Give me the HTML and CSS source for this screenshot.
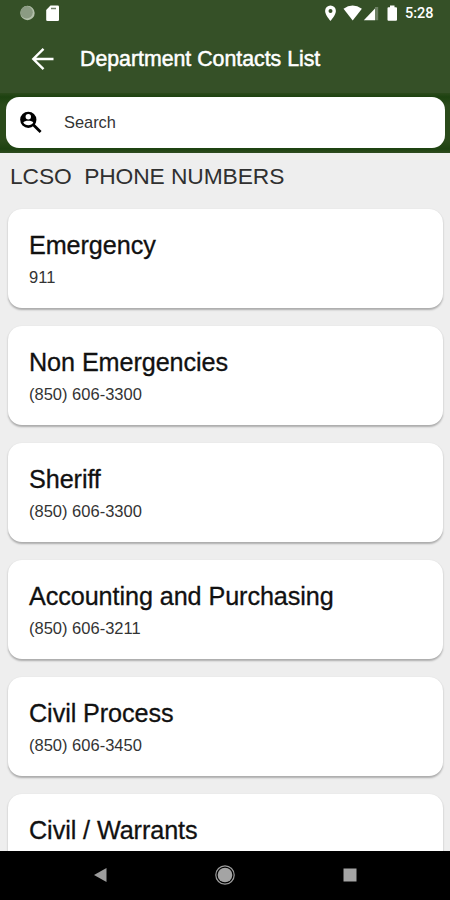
FILE: index.html
```html
<!DOCTYPE html>
<html lang="en">
<head>
<meta charset="utf-8">
<title>Department Contacts List</title>
<link rel="stylesheet" href="styles.css">
</head>
<body>
<div class="screen">
  <div class="status">
    <svg class="status-left" width="50" height="26" viewBox="0 0 50 26">
      <circle cx="17.500" cy="13" r="7.200" fill="#b3c0ab"/>
      <circle cx="16.600" cy="12.300" r="6.200" fill="#8b9b83"/>
      <path d="M40.500 5.500h7.200q1.300 0 1.300 1.300v12.900q0 1.300-1.300 1.300h-10.200q-1.300 0-1.300-1.300v-9.700z" fill="#fff"/>
      <path d="M41 8.500h5" stroke="#71806a" stroke-width="1.500"/>
    </svg>
    <svg width="80" height="26" viewBox="0 0 80 26" fill="#fff">
      <path fill-rule="evenodd" d="M5.500 5.500a5.400 5.400 0 0 0-5.400 5.400c0 4 5.400 9.900 5.400 9.900s5.400-5.900 5.400-9.900a5.400 5.400 0 0 0-5.400-5.400zm0 3.500a2 2 0 1 1 0 4 2 2 0 0 1 0-4z"/>
      <path d="M18.500 8.800q9-6.600 18.400 0l-9.200 11.700z"/>
      <path d="M50 7h3.200v13.200h-3.200z" fill="#6d8064"/>
      <path d="M50 8.500v11.700h-11.200z"/>
      <path d="M65 5.500h4.500v1.700h1.500q1 0 1 1v11.500q0 1-1 1h-7.500q-1 0-1-1v-11.500q0-1 1-1h1.500z"/>
    </svg>
    <span class="clock">5:28</span>
  </div>
  <header class="bar">
    <svg width="24" height="24" viewBox="0 0 24 24" fill="none" stroke="#fff" stroke-width="2.400"><path d="M23.500 12h-20M13.500 1.800l-10.200 10.200 10.200 10.200"/></svg>
    <h1>Department Contacts List</h1>
  </header>
  <div class="search-wrap">
    <div class="search">
      <svg width="24" height="24" viewBox="0 0 24 24">
        <circle cx="8.300" cy="8.800" r="8.100" fill="#000"/>
        <circle cx="8.300" cy="5.700" r="2.700" fill="#fff"/>
        <path d="M3.300 11.600c1-2.600 9-2.600 10 0-1.900 3.500-8.100 3.500-10 0z" fill="#fff"/>
        <path d="M12.800 13.300l7.800 7.800" stroke="#000" stroke-width="2.800"/>
      </svg>
      <span>Search</span>
    </div>
  </div>
  <main class="content">
    <h2>LCSO  PHONE NUMBERS</h2>
    <div class="cards">
      <section class="card"><h3>Emergency</h3><p>911</p></section>
      <section class="card"><h3>Non Emergencies</h3><p>(850) 606-3300</p></section>
      <section class="card"><h3>Sheriff</h3><p>(850) 606-3300</p></section>
      <section class="card"><h3>Accounting and Purchasing</h3><p>(850) 606-3211</p></section>
      <section class="card"><h3>Civil Process</h3><p>(850) 606-3450</p></section>
      <section class="card"><h3>Civil / Warrants</h3></section>
    </div>
  </main>
  <nav class="nav">
    <svg width="14" height="16" viewBox="0 0 14 16"><path d="M1 8l12.500-7v14z" fill="#9c9c9c"/></svg>
    <svg width="20" height="20" viewBox="0 0 20 20"><circle cx="10" cy="10" r="9.200" fill="none" stroke="#9c9c9c" stroke-width="1.200"/><circle cx="10" cy="10" r="7.300" fill="#a4a4a4"/></svg>
    <svg width="14" height="14" viewBox="0 0 14 14"><rect x=".5" y=".5" width="13" height="13" fill="#a4a4a4"/></svg>
  </nav>
</div>
</body>
</html>
```
FILE: styles.css
```css
* { box-sizing: border-box; }
body { margin: 0; font-family: "Liberation Sans", Arial, sans-serif; }
h1, h2, h3, p { margin: 0; font-weight: 400; white-space: pre; }
svg { display: block; flex: none; }
.screen {
  width: 450px;
  height: 900px;
  display: flex;
  flex-direction: column;
  overflow: hidden;
  background: #eeeeee;
}
.status {
  height: 26px;
  flex: none;
  display: flex;
  background: #355027;
  padding-left: 10px;
}
.status-left { margin-right: 265px; }
.clock {
  font: 500 14.5px/27px Roboto, sans-serif;
  color: #fff;
}
.bar {
  height: 67px;
  flex: none;
  display: flex;
  align-items: center;
  gap: 26px;
  padding: 0 0 1px 30px;
  background: #355027;
}
.bar h1 {
  font-size: 21.3px;
  color: #fff;
  -webkit-text-stroke: 0.5px #fff;
}
.search-wrap {
  height: 60px;
  flex: none;
  padding: 4px 5px 5px 6px;
  background: linear-gradient(#2b491b, #1d4210 4px, #2a4a1a 12px, #2a4a1a 48px, #1d4210 56px, #2e4b20);
}
.search {
  height: 51px;
  display: flex;
  align-items: center;
  gap: 20px;
  padding-left: 14px;
  border-radius: 13px;
  background: #fff;
  color: #333;
  font-size: 16.4px;
}
.content { flex: 1; min-height: 0; overflow: hidden; }
.content h2 {
  height: 56px;
  padding-left: 10px;
  font-size: 22.8px;
  line-height: 46px;
  letter-spacing: -0.1px;
  color: #303030;
}
.cards {
  display: flex;
  flex-direction: column;
  gap: 18px;
  padding: 0 7px 0 8px;
}
.card {
  height: 99px;
  flex: none;
  padding: 21px 0 0 21px;
  border-radius: 14px;
  background: #fff;
  box-shadow: 0 1.5px 2px rgba(0, 0, 0, 0.28);
}
.card h3 {
  font-size: 25.2px;
  line-height: 30px;
  letter-spacing: -0.08px;
  color: #111;
  -webkit-text-stroke: 0.3px #111;
}
.card p {
  margin-top: 7px;
  font-size: 16.5px;
  line-height: 20px;
  color: #333;
}
.nav {
  height: 49px;
  flex: none;
  display: flex;
  align-items: center;
  justify-content: space-between;
  padding: 0 93px 1px;
  background: #000;
}
```
